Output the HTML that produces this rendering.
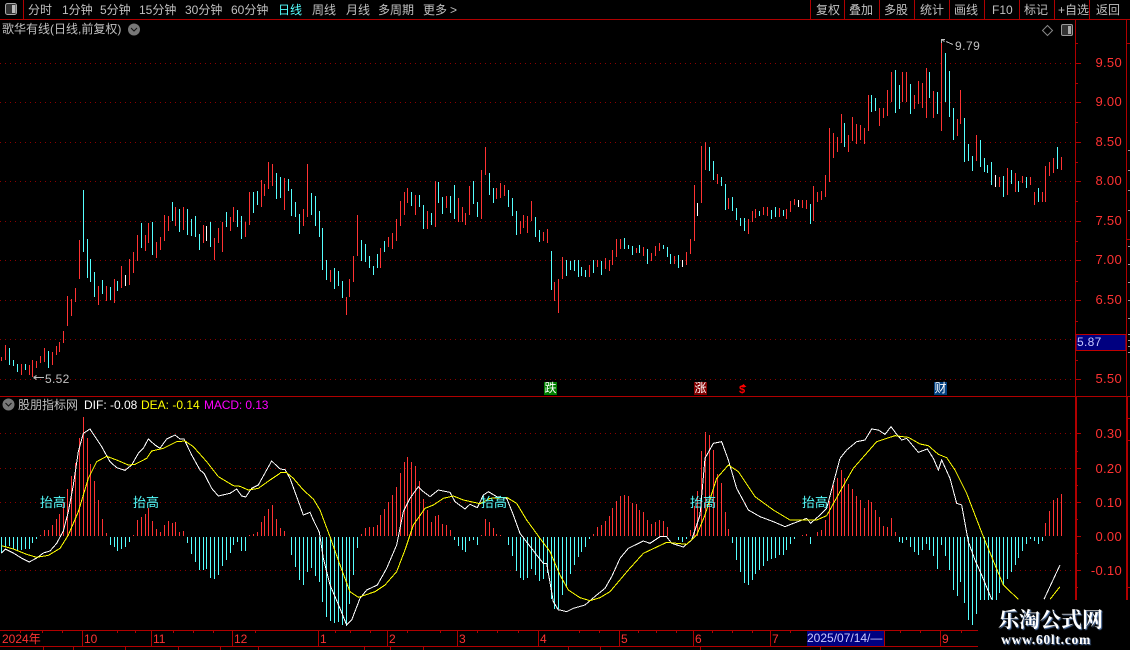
<!DOCTYPE html>
<html><head><meta charset="utf-8"><style>
html,body{margin:0;padding:0;background:#000}
#w{position:relative;width:1130px;height:650px;overflow:hidden;background:#000;font:12px/14px "Liberation Sans","WenQuanYi Zen Hei","Noto Sans CJK SC",sans-serif;color:#c0c0c0}
#w svg{position:absolute;left:0;top:0}
.t{position:absolute;white-space:nowrap}
.r{color:#ff3232}
.a{left:1081px;width:41px;text-align:right;color:#ff3232;font-size:13px;letter-spacing:.3px}
.c{color:#55ffff;font-size:13px}
.m{font-size:12px;color:#fff;text-align:center;width:13px;height:13px;line-height:13px}
</style></head><body><div id="w">
<svg width="1130" height="650" viewBox="0 0 1130 650" shape-rendering="crispEdges" fill="none">
<g stroke="#8c0000" stroke-dasharray="1 4">
<path d="M0 63.5H1075M0 102.5H1075M0 142.5H1075M0 181.5H1075M0 221.5H1075M0 260.5H1075M0 300.5H1075M0 339.5H1075M0 379.5H1075M0 433.5H1075M0 468.5H1075M0 502.5H1075M0 570.5H1075"/>
</g>
<g stroke="#b00000">
<path d="M0 19.5H1130M23.5 0V19M810.5 0V19M844.5 0V19M879.5 0V19M914.5 0V19M949.5 0V19M984.5 0V19M1019.5 0V19M1054.5 0V19M1089.5 0V19"/>
<path d="M0 396.5H1130M1075.5 20V396M1126.5 20V396"/>
<path d="M1075 63.5H1081M1075 102.5H1081M1075 142.5H1081M1075 181.5H1081M1075 221.5H1081M1075 260.5H1081M1075 300.5H1081M1075 339.5H1081M1075 379.5H1081M1075 43.5H1078M1075 83.5H1078M1075 122.5H1078M1075 162.5H1078M1075 201.5H1078M1075 241.5H1078M1075 281.5H1078M1075 321.5H1078M1075 360.5H1078"/>
<path d="M1075 433.5H1081M1075 468.5H1081M1075 502.5H1081M1075 536.5H1081M1075 570.5H1081M1075 451.5H1078M1075 485.5H1078M1075 519.5H1078M1075 553.5H1078M1075 587.5H1078"/>
<path d="M1127 43.5H1130M1127 239.5H1130M1127 418.5H1130M1127 440.5H1130M1127 587.5H1130"/>
<path d="M0 630.5H978M0 646.5H978M82.5 630V646M151.5 630V646M232.5 630V646M318.5 630V646M387.5 630V646M457.5 630V646M538.5 630V646M619.5 630V646M693.5 630V646M770.5 630V646M884.5 630V646M940.5 630V646"/>
<path d="M20.5 630V633M42.5 630V633M62.5 630V633M117.5 630V633M135.5 630V633M173.5 630V633M193.5 630V633M213.5 630V633M255.5 630V633M335.5 630V633M350.5 630V633M370.5 630V633M407.5 630V633M440.5 630V633M477.5 630V633M497.5 630V633M518.5 630V633M579.5 630V633M599.5 630V633M638.5 630V633M656.5 630V633M676.5 630V633M712.5 630V633M732.5 630V633M752.5 630V633M790.5 630V633M900.5 630V633M920.5 630V633M961.5 630V633"/>
<path d="M43.5 647V650M73.5 647V650M125.5 647V650M178.5 647V650M220.5 647V650M258.5 647V650M364.5 647V650M390.5 647V650M423.5 647V650M568.5 647V650M600.5 647V650M700.5 647V650M820.5 647V650"/>
</g>
<rect x="1075" y="396" width="2" height="204" fill="#b00000"/><rect x="1126" y="396" width="2" height="204" fill="#b00000"/>
<rect x="1076" y="334.5" width="50" height="16" fill="#000080" stroke="#c00000"/>
<path d="M1128 334.5H1130M1128 340.5H1130M1128 346.5H1130M1128 352.5H1130M1128 150.5H1130M1128 170.5H1130M1128 190.5H1130M1128 210.5H1130M1128 246.5H1130M1128 264.5H1130M1128 282.5H1130M1128 300.5H1130M1128 318.5H1130" stroke="#9a9a9a"/>
<g transform="translate(.5 0)">
<path stroke="#ff3232" d="M1 357V361M5 345V360M21 364V375M29 365V375M32 360V377M36 361V368M40 356V363M44 348V362M52 352V365M56 346V355M59 342V352M63 331V343M67 296V326M71 299V316M75 288V302M79 240V279M98 286V305M106 286V301M114 279V303M121 266V288M129 259V285M133 252V273M137 235V261M145 235V251M148 223V243M156 242V258M160 237V250M164 215V241M168 216V231M175 207V226M183 207V230M203 225V243M214 238V260M218 228V243M222 222V252M230 217V231M233 207V222M245 222V237M249 192V225M261 180V207M264 184V196M268 162V189M272 164V186M284 178V210M303 209V226M307 164V217M330 270V282M346 297V315M349 279V297M353 256V282M357 215V256M380 248V268M388 237V247M392 233V249M396 219V241M400 201V226M404 192V215M407 188V203M415 195V215M427 211V229M435 181V227M446 196V208M458 198V222M462 207V222M465 213V225M469 186V215M481 170V219M485 147V175M496 188V199M500 183V198M504 185V196M520 221V234M523 215V228M527 216V233M531 201V221M543 232V241M547 229V243M554 282V301M558 279V313M562 257V279M589 265V277M597 260V267M605 258V269M609 260V271M612 250V265M616 239V257M620 239V249M636 248V253M643 247V256M651 253V261M655 246V256M659 243V251M674 256V264M686 252V265M690 239V254M694 185V241M701 146V203M705 142V170M717 174V184M728 198V209M748 219V234M752 211V222M755 209V218M763 207V215M767 207V216M779 208V217M786 209V219M790 201V212M794 199V205M802 200V208M806 200V209M813 186V221M817 192V202M821 191V200M825 175V197M829 128V182M833 133V158M837 137V152M841 114V143M848 135V152M852 117V141M856 124V144M860 125V140M864 128V144M868 95V131M879 108V126M883 108V118M887 90V116M891 72V102M902 72V102M906 72V102M914 95V109M918 81V104M922 83V108M926 68V118M933 91V118M941 43V131M957 119V136M960 90V124M976 135V161M999 177V187M1007 168V195M1015 173V192M1022 176V183M1030 177V185M1034 192V205M1042 192V202M1045 166V202M1049 162V176M1053 158V173M1061 157V170"/>
<path stroke="#55ffff" d="M9 348V365M13 360V366M17 364V372M25 364V370M48 351V368M83 190V252M87 239V278M90 259V282M94 272V297M102 280V294M110 287V300M117 281V291M141 223V248M152 222V255M172 202V221M179 209V232M187 209V235M191 219V236M195 216V237M199 234V250M210 222V247M226 212V227M237 210V227M241 216V239M253 192V213M257 191V205M276 173V199M280 177V198M288 179V191M291 189V216M295 202V217M299 214V234M311 193V215M315 196V226M319 211V237M322 228V270M326 260V280M334 268V289M338 271V286M342 281V298M361 240V261M365 244V262M369 256V268M373 266V275M377 254V268M384 241V252M411 192V206M419 195V207M423 205V229M431 213V225M438 182V203M442 197V214M450 196V213M454 185V219M473 181V204M477 202V217M489 173V195M493 188V203M508 190V207M512 198V216M516 211V235M535 217V237M539 230V242M551 251V290M566 260V276M570 261V270M574 260V271M578 260V277M581 267V276M585 270V277M593 260V273M601 261V275M624 238V249M628 245V249M632 246V255M639 245V253M647 249V264M663 245V249M667 247V257M670 254V264M678 255V268M709 147V171M713 161V180M721 177V186M725 184V210M732 197V211M736 208V220M740 218V226M744 218V231M759 211V216M771 210V219M775 207V217M783 210V216M810 204V224M844 123V147M871 95V112M875 98V111M895 70V113M899 85V109M910 84V114M929 72V98M937 92V114M945 53V102M949 71V117M953 108V140M964 118V162M968 144V161M972 156V171M980 140V167M984 158V172M987 165V173M991 162V185M1003 176V197M1011 170V184M1018 181V192M1026 177V188M1038 188V202M1057 147V169"/>
<path stroke="#fff" d="M125 275V286M206 226V241M682 260V267M697 203V216M798 200V207M995 175V187"/>
<path stroke="#ff3232" d="M40 535V536M44 530V536M48 530V536M52 525V536M56 519V536M59 514V536M63 502V536M67 489V536M71 476V536M75 463V536M79 438V536M83 417V536M87 438V536M90 464V536M94 481V536M98 500V536M102 519V536M106 533V536M133 535V536M137 520V536M141 517V536M145 514V536M148 508V536M152 521V536M156 529V536M160 532V536M164 525V536M168 521V536M172 523V536M175 522V536M179 532V536M183 531V536M249 535V536M253 534V536M257 532V536M261 522V536M264 516V536M268 509V536M272 505V536M276 519V536M280 528V536M284 531V536M361 534V536M365 528V536M369 527V536M373 527V536M377 525V536M380 515V536M384 509V536M388 502V536M392 495V536M396 487V536M400 473V536M404 462V536M407 457V536M411 462V536M415 466V536M419 481V536M423 499V536M427 510V536M431 522V536M435 516V536M438 515V536M442 524V536M446 525V536M450 530V536M481 535V536M485 519V536M489 522V536M493 528V536M496 534V536M500 535V536M593 534V536M597 527V536M601 525V536M605 521V536M609 516V536M612 508V536M616 501V536M620 496V536M624 495V536M628 496V536M632 503V536M636 504V536M639 510V536M643 512V536M647 520V536M651 524V536M655 522V536M659 520V536M663 521V536M667 527V536M690 530V536M694 506V536M697 491V536M701 451V536M705 432V536M709 435V536M713 450V536M717 474V536M721 483V536M725 512V536M728 529V536M802 535V536M806 534V536M817 532V536M821 530V536M825 520V536M829 501V536M833 485V536M837 478V536M841 470V536M844 478V536M848 484V536M852 489V536M856 496V536M860 500V536M864 508V536M868 500V536M871 502V536M875 510V536M879 517V536M883 526V536M887 527V536M891 518V536M895 532V536M1045 523V536M1049 511V536M1053 500V536M1057 498V536M1061 494V536"/>
<path stroke="#55ffff" d="M1 537V553M5 537V547M9 537V546M13 537V549M17 537V551M21 537V550M25 537V549M29 537V549M32 537V543M36 537V539M110 537V545M114 537V547M117 537V551M121 537V549M125 537V547M129 537V542M187 537V543M191 537V554M195 537V562M199 537V570M203 537V570M206 537V569M210 537V578M214 537V579M218 537V575M222 537V566M226 537V560M230 537V553M233 537V545M237 537V542M241 537V551M245 537V551M291 537V555M295 537V567M299 537V580M303 537V585M307 537V572M311 537V568M315 537V576M319 537V582M322 537V602M326 537V617M330 537V621M334 537V623M338 537V622M342 537V625M346 537V626M349 537V604M353 537V575M357 537V548M454 537V540M458 537V546M462 537V550M465 537V552M469 537V541M473 537V540M477 537V545M508 537V545M512 537V556M516 537V571M520 537V578M523 537V580M527 537V578M531 537V569M535 537V575M539 537V581M543 537V579M547 537V573M551 537V599M554 537V609M558 537V609M562 537V595M566 537V586M570 537V574M574 537V565M578 537V557M581 537V552M585 537V547M589 537V539M678 537V540M682 537V542M686 537V539M732 537V543M736 537V560M740 537V572M744 537V583M748 537V585M752 537V580M755 537V574M759 537V570M763 537V566M767 537V561M771 537V559M775 537V558M779 537V555M783 537V555M786 537V550M790 537V544M794 537V539M810 537V544M899 537V542M902 537V543M906 537V540M910 537V547M914 537V552M918 537V555M922 537V550M926 537V544M929 537V550M933 537V556M937 537V569M941 537V545M945 537V556M949 537V570M953 537V590M957 537V596M960 537V582M964 537V603M968 537V620M972 537V625M976 537V614M980 537V600M984 537V600M988 537V600M992 537V600M996 537V600M999 537V593M1003 537V585M1007 537V579M1011 537V572M1015 537V565M1018 537V558M1022 537V551M1026 537V544M1030 537V539M1034 537V541M1038 537V544M1042 537V541"/>
</g>
<g stroke-width="3">
<g transform="translate(0 395) scale(.33333)">
<polyline stroke="#fff" points="4,474 16,462 40,474 64,489 88,501 110,489 130,474 150,468 170,445 190,408 205,350 220,270 235,170 250,115 270,102 285,125 305,155 330,200 350,218 375,226 395,210 415,175 430,160 445,132 465,150 480,160 500,132 525,120 540,132 552,132 575,180 600,225 612,235 635,280 655,303 690,295 710,282 725,303 737,306 755,280 775,270 800,225 815,198 840,222"/>
<polyline stroke="#ff0" points="4,452 40,462 80,478 110,487 145,481 180,460 205,420 235,350 265,250 290,200 320,184 350,195 385,210 405,208 440,190 455,168 490,160 530,140 555,138 580,155 620,200 655,245 700,272 720,274 745,285 775,280 810,255 840,235"/>
</g>
<g transform="translate(280 395) scale(.33333)">
<polyline stroke="#fff" points="0,222 15,224 30,250 50,305 70,360 90,352 100,375 118,412 130,490 150,570 180,640 200,690 215,675 240,610 260,585 292,570 320,520 350,450 370,350 390,310 415,275 430,290 450,305 475,285 510,292 525,320 555,342 570,328 592,338 610,300 625,290 650,305 680,310 700,360 720,415 770,480 790,505 800,505 820,620 835,645 840,645"/>
<polyline stroke="#ff0" points="0,233 20,233 40,250 70,285 100,312 120,345 150,425 180,510 210,590 235,607 285,590 315,570 350,530 375,465 400,390 435,340 460,330 490,310 520,303 550,315 600,326 630,310 680,307 710,325 740,375 780,430 810,470 840,540"/>
</g>
<g transform="translate(560 395) scale(.33333)">
<polyline stroke="#fff" points="0,645 20,650 40,640 75,630 110,600 135,580 155,545 180,490 205,460 250,438 270,445 300,425 320,425 335,445 370,456 395,435 420,360 435,190 460,145 485,140 505,195 530,280 565,345 600,365 640,380 675,395 700,385 740,370 752,385 780,360 800,340 840,190"/>
<polyline stroke="#ff0" points="0,540 25,585 60,608 90,617 120,608 150,590 205,525 250,475 320,442 380,448 410,420 435,360 470,250 505,210 535,230 585,305 640,345 690,375 770,375 800,362 840,290"/>
</g>
<g transform="translate(840 395) scale(.33333)">
<polyline stroke="#fff" points="0,190 20,165 50,140 75,135 95,102 115,105 135,118 153,95 170,118 185,135 200,130 235,172 262,162 280,190 295,225 305,195 330,250 350,325 365,330 385,440 405,495 425,540 455,613"/>
<polyline stroke="#fff" points="612,613 660,510"/>
<polyline stroke="#ff0" points="0,290 40,220 75,180 110,140 165,122 205,127 240,147 265,152 295,178 320,188 345,225 380,295 430,425 490,570 535,613"/>
<polyline stroke="#ff0" points="630,613 660,575"/>
</g>
</g>
<rect x="978" y="600" width="152" height="50" fill="#000"/>
<rect x="807" y="631" width="77" height="15" fill="#000080"/>
<g stroke="#c0c0c0">
<path d="M33.5 377.5H44M33.5 377.5l3 -2M33.5 377.5l3 2"/>
<path d="M941.5 43V39.5H945M941.5 39.5l3 2M946 41.5l7 3"/>
</g>
<g shape-rendering="auto">
<rect x="5.5" y="3.5" width="11" height="11" rx="2" fill="#333" stroke="#aaa"/><rect x="12" y="5" width="3.5" height="8" fill="#bbb"/>
<rect x="1061.5" y="24.5" width="11" height="11" rx="1.5" fill="#333" stroke="#999"/><rect x="1068" y="26" width="3" height="8" fill="#aaa"/>
<path d="M1047.5 25.5l5 5-5 5-5-5z" stroke="#888"/>
<circle cx="134" cy="29.5" r="6" fill="#777"/><path d="M131 28l3 3 3-3" stroke="#111"/>
<circle cx="8.5" cy="404.5" r="6" fill="#777"/><path d="M5.5 403l3 3 3-3" stroke="#111"/>
<path d="M743.5 384l-3 3h6z" fill="#f00"/>
</g>
</svg>
<div class="t" style="left:28px;top:3px">分时</div>
<div class="t" style="left:62px;top:3px">1分钟</div>
<div class="t" style="left:100px;top:3px">5分钟</div>
<div class="t" style="left:139px;top:3px">15分钟</div>
<div class="t" style="left:185px;top:3px">30分钟</div>
<div class="t" style="left:231px;top:3px">60分钟</div>
<div class="t" style="left:278px;top:3px;color:#55ffff">日线</div>
<div class="t" style="left:312px;top:3px">周线</div>
<div class="t" style="left:346px;top:3px">月线</div>
<div class="t" style="left:378px;top:3px">多周期</div>
<div class="t" style="left:423px;top:3px">更多</div>
<div class="t" style="left:450px;top:3px">&gt;</div>
<div class="t" style="left:816px;top:3px">复权</div>
<div class="t" style="left:849px;top:3px">叠加</div>
<div class="t" style="left:884px;top:3px">多股</div>
<div class="t" style="left:920px;top:3px">统计</div>
<div class="t" style="left:954px;top:3px">画线</div>
<div class="t" style="left:992px;top:3px">F10</div>
<div class="t" style="left:1024px;top:3px">标记</div>
<div class="t" style="left:1058px;top:3px">+自选</div>
<div class="t" style="left:1096px;top:3px">返回</div>
<div class="t" style="left:2px;top:22px">歌华有线(日线,前复权)</div>
<div class="t" style="left:955px;top:39px;font-size:12px;letter-spacing:.5px">9.79</div>
<div class="t" style="left:45px;top:372px;letter-spacing:.3px">5.52</div>
<div class="t a" style="top:56px">9.50</div><div class="t a" style="top:95px">9.00</div><div class="t a" style="top:135px">8.50</div><div class="t a" style="top:174px">8.00</div><div class="t a" style="top:214px">7.50</div><div class="t a" style="top:253px">7.00</div><div class="t a" style="top:293px">6.50</div><div class="t a" style="top:372px">5.50</div>
<div class="t" style="left:1077px;top:335px;color:#c8c8ff;letter-spacing:.3px">5.87</div>
<div class="t m" style="left:544px;top:382px;background:#008000">跌</div>
<div class="t m" style="left:694px;top:382px;background:#800000">涨</div>
<div class="t" style="left:739px;top:385px;color:#f00;font-weight:bold;font-size:11px;line-height:11px">$</div>
<div class="t m" style="left:934px;top:382px;background:#004080">财</div>
<div class="t" style="left:18px;top:398px">股朋指标网</div>
<div class="t" style="left:84px;top:398px;color:#fff">DIF: -0.08</div>
<div class="t" style="left:141px;top:398px;color:#ff0">DEA: -0.14</div>
<div class="t" style="left:204px;top:398px;color:#f0f;letter-spacing:-.1px">MACD: 0.13</div>
<div class="t c" style="left:40px;top:496px">抬高</div>
<div class="t c" style="left:133px;top:496px">抬高</div>
<div class="t c" style="left:481px;top:496px">抬高</div>
<div class="t c" style="left:690px;top:496px">抬高</div>
<div class="t c" style="left:802px;top:496px">抬高</div>
<div class="t a" style="top:427px">0.30</div><div class="t a" style="top:462px">0.20</div><div class="t a" style="top:496px">0.10</div><div class="t a" style="top:530px">0.00</div><div class="t a" style="top:564px">-0.10</div>
<div class="t r" style="left:2px;top:632px">2024年</div>
<div class="t r" style="left:84px;top:632px">10</div>
<div class="t r" style="left:153px;top:632px">11</div>
<div class="t r" style="left:234px;top:632px">12</div>
<div class="t r" style="left:320px;top:632px">1</div>
<div class="t r" style="left:389px;top:632px">2</div>
<div class="t r" style="left:459px;top:632px">3</div>
<div class="t r" style="left:540px;top:632px">4</div>
<div class="t r" style="left:621px;top:632px">5</div>
<div class="t r" style="left:695px;top:632px">6</div>
<div class="t r" style="left:772px;top:632px">7</div>
<div class="t" style="left:807px;top:631px;color:#c8c8ff">2025/07/14/—</div>
<div class="t r" style="left:942px;top:632px">9</div>
<div class="t" style="left:998px;top:607px;font:bold 21px/24px 'Noto Serif CJK SC',serif;color:#fff;text-shadow:1px 1px 1px #5577aa">乐淘公式网</div>
<div class="t" style="left:1001px;top:632px;font:bold 13.5px/16px 'Liberation Serif',serif;letter-spacing:.75px;color:#fff;text-shadow:1px 1px 1px #5577aa">www.60lt.com</div>
</div></body></html>
